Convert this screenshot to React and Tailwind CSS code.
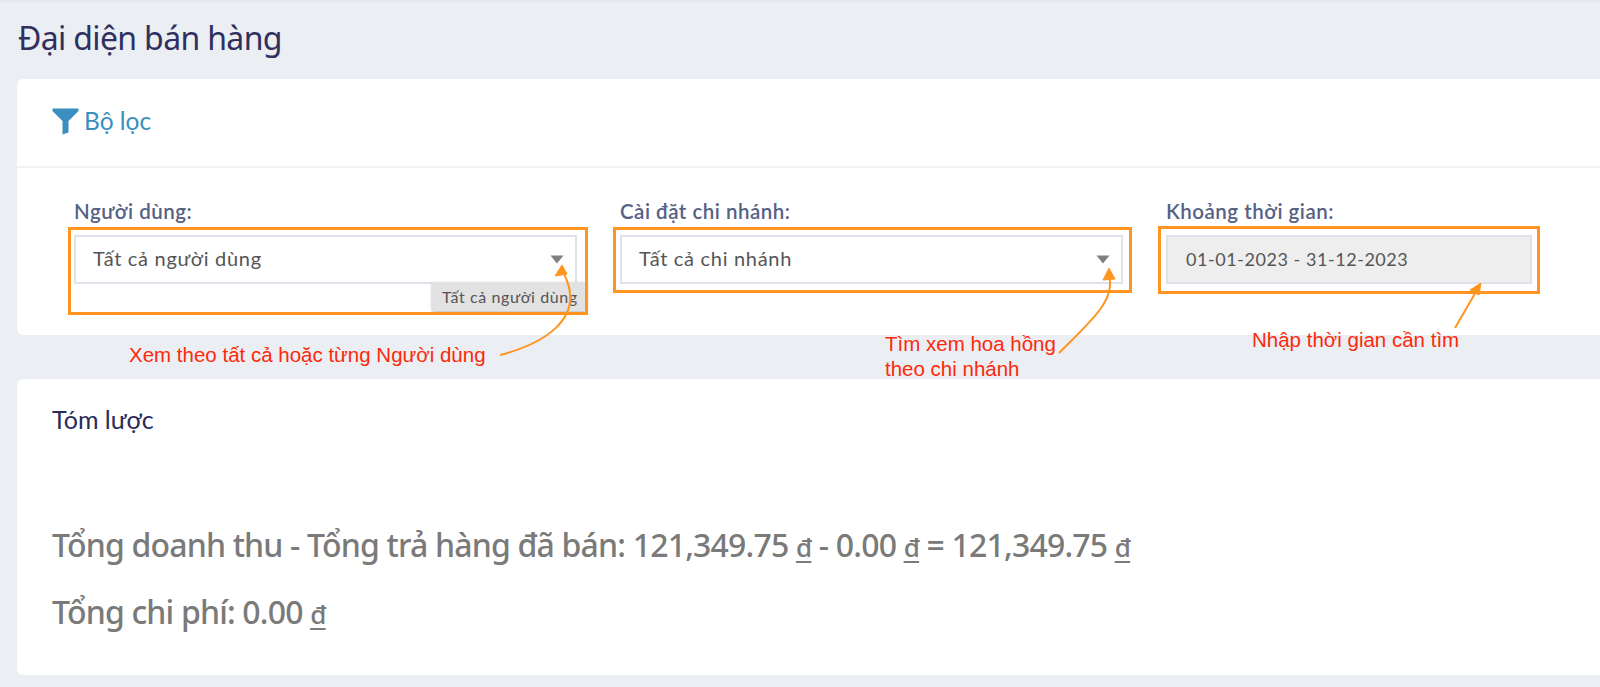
import React from "react";

const Caret = () => (
  <svg width="14" height="9" viewBox="0 0 14 9" className="shrink-0">
    <path d="M0.5 0.5h13L6.9 8.5z" fill="#808080" />
  </svg>
);

const SelectBox = ({ text, width }) => (
  <div className={`flex h-[49px] items-center justify-between border-2 border-[#dfe2e8] bg-white pl-[17px] pr-[11px] ${width}`}>
    <span className="pb-[3px] font-['Lato',sans-serif] text-[20px] tracking-[0.7px] text-[#555555]">{text}</span>
    <Caret />
  </div>
);

const Label = ({ children }) => (
  <div className="mb-[12px] h-[24px] font-['Lato',sans-serif] text-[20.5px] font-semibold leading-[24px] tracking-[0.5px] whitespace-nowrap text-[#566184]">{children}</div>
);

const Orange = ({ cls }) => <div className={`pointer-events-none absolute border-[3px] border-[#ff9520] ${cls}`} />;

const Note = ({ cls, children }) => (
  <div className={`absolute font-['Liberation_Sans',sans-serif] text-[20.5px] leading-[25px] whitespace-nowrap text-[#fb2a0a] ${cls}`}>{children}</div>
);

const Dong = () => <span className="text-[26px] underline underline-offset-[4px]">đ</span>;

export default function App() {
  return (
    <div className="relative h-[687px] overflow-hidden bg-[#ebeef3] font-['Lato',sans-serif]">
      <div className="h-[2px] bg-[#e5e8ed]" />
      <h1 className="ml-[18px] h-[77px] pt-[12px] font-['Noto_Sans',sans-serif] text-[32px] leading-[48px] tracking-[-0.65px] text-[#30305f]">Đại diện bán hàng</h1>

      <section className="ml-[17px] h-[256px] rounded-l-[6px] bg-white">
        <div className="flex h-[89px] items-center gap-[5px] border-b-2 border-[#f2f3f6] pl-[35px] pb-[3px]">
          <svg width="27" height="27" viewBox="0 0 27 27">
            <path d="M0.5 0.5h26v2.5L16.5 13v11.5L10.5 26.5V13L0.5 3z" fill="#3a8fbf" />
          </svg>
          <span className="text-[24.5px] text-[#3a8fbf]">Bộ lọc</span>
        </div>
        <div className="flex pt-[31px] pl-[57px]">
          <div className="w-[546px]">
            <Label>Người dùng:</Label>
            <SelectBox text="Tất cả người dùng" width="w-[503px]" />
          </div>
          <div className="w-[546px]">
            <Label>Cài đặt chi nhánh:</Label>
            <SelectBox text="Tất cả chi nhánh" width="w-[503px]" />
          </div>
          <div>
            <Label>Khoảng thời gian:</Label>
            <div className="flex h-[49px] w-[366px] items-center border-2 border-[#dfe2e8] bg-[#eeeeee] pl-[18px] text-[18px] tracking-[0.55px] text-[#555555]">01-01-2023 - 31-12-2023</div>
          </div>
        </div>
      </section>

      <section className="mt-[44px] ml-[17px] h-[296px] rounded-l-[6px] bg-white pl-[35px]">
        <h2 className="pt-[24px] text-[25px] leading-[32px] text-[#2b2b5a]">Tóm lược</h2>
        <p className="mt-[86px] font-['Noto_Sans',sans-serif] text-[32px] font-medium leading-[48px] tracking-[-0.82px] text-[#7a7a7a]">
          Tổng doanh thu - Tổng trả hàng đã bán: 121,349.75 <Dong /> - 0.00 <Dong /> = 121,349.75 <Dong />
        </p>
        <p className="mt-[17px] font-['Noto_Sans',sans-serif] text-[32px] font-medium leading-[48px] tracking-[-0.82px] text-[#7a7a7a]">
          Tổng chi phí: 0.00 <Dong />
        </p>
      </section>

      <div className="absolute top-[282px] left-[432px] flex h-[29px] w-[155px] items-center rounded-[2px] bg-[#e2e2e2] pl-[10px] text-[16px] tracking-[0.6px] whitespace-nowrap text-[#555555] shadow-[0_1px_3px_rgba(0,0,0,0.3)]">Tất cả người dùng</div>

      <Orange cls="top-[227px] left-[68px] h-[88px] w-[520px]" />
      <Orange cls="top-[227px] left-[613px] h-[66px] w-[519px]" />
      <Orange cls="top-[226px] left-[1158px] h-[68px] w-[382px]" />

      <Note cls="top-[342px] left-[129px]">Xem theo tất cả hoặc từng Người dùng</Note>
      <Note cls="top-[331px] left-[885px]">Tìm xem hoa hồng<br />theo chi nhánh</Note>
      <Note cls="top-[327px] left-[1252px]">Nhập thời gian cần tìm</Note>

      <svg className="pointer-events-none absolute top-0 left-0" width="1600" height="687" viewBox="0 0 1600 687" fill="none">
        <path d="M500 355C535 346 590 322 563 272" stroke="#ff9520" strokeWidth="2" />
        <path d="M562 265l-7 11 12-2z" fill="#ff9520" stroke="#ff9520" strokeWidth="1" />
        <path d="M1059 353C1090 322 1116 300 1109 276" stroke="#ff9520" strokeWidth="2" />
        <path d="M1109 268l-6 12 12-1z" fill="#ff9520" stroke="#ff9520" strokeWidth="1" />
        <path d="M1455 328L1477 290" stroke="#ff9520" strokeWidth="2" />
        <path d="M1481 283l-11 7 9 5z" fill="#ff9520" stroke="#ff9520" strokeWidth="1" />
      </svg>
    </div>
  );
}
